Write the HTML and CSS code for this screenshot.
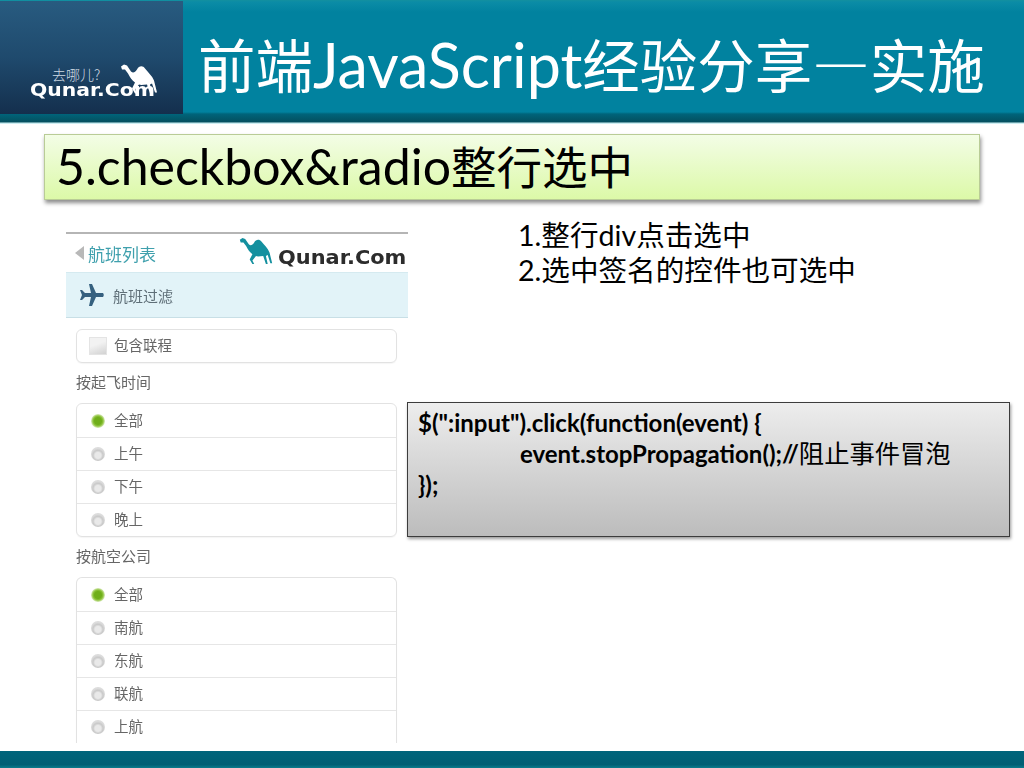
FILE: index.html
```html
<!DOCTYPE html>
<html lang="zh-CN">
<head>
<meta charset="utf-8">
<title>前端JavaScript经验分享—实施</title>
<link rel="stylesheet" href="styles.css">
</head>
<body>
<div class="slide">
  <header class="top">
    <div class="brand">
      <div class="brand-inner">
        <div class="brand-row">
          <span class="brand-cn">去哪儿?</span>
          <svg class="camel camel-white" viewBox="0 0 36 30"><path d="M0 2 L3 0 L6 1 L10 7 C12 9 14 8 16 5 C18 1 22 1 24 4 C27 8 31 11 33 16 L36 28 L34 28 L31 19 L29 20 L31 29 L29 29 L26 20 C23 20 20 21 18 20 L14 25 L16 29 L14 29 L11 24 L14 18 C11 16 9 13 7 9 L4 5 L1 5 Z"/></svg>
        </div>
        <div class="brand-en">Qunar.Com</div>
      </div>
    </div>
    <h1 class="title">前端<span class="title-latin">JavaScript</span>经验分享<span class="title-dash">—</span>实施</h1>
  </header>

  <h2 class="subtitle"><span class="subtitle-latin">5.checkbox&amp;radio</span>整行选中</h2>

  <main class="content">
    <section class="phone">
      <div class="phone-head">
        <span class="back"><i class="back-arrow"></i>航班列表</span>
        <span class="phone-logo">
          <svg class="camel camel-teal" viewBox="0 0 36 30"><path d="M0 2 L3 0 L6 1 L10 7 C12 9 14 8 16 5 C18 1 22 1 24 4 C27 8 31 11 33 16 L36 28 L34 28 L31 19 L29 20 L31 29 L29 29 L26 20 C23 20 20 21 18 20 L14 25 L16 29 L14 29 L11 24 L14 18 C11 16 9 13 7 9 L4 5 L1 5 Z"/></svg>
          <span class="phone-logo-text">Qunar.Com</span>
        </span>
      </div>
      <div class="filter-bar">
        <svg class="plane" viewBox="0 0 24 24"><path d="M9 1 L12 1 L16 10 L23 10 C24 11 24 13 23 14 L16 14 L12 23 L9 23 L11 14 L5 14 L2 17 L0 17 L2 12 L0 7 L2 7 L5 10 L11 10 Z"/></svg>
        <span>航班过滤</span>
      </div>
      <div class="filters">
        <div class="card">
          <div class="row row-single"><i class="check"></i>包含联程</div>
        </div>
        <div class="group-label">按起飞时间</div>
        <div class="card">
          <div class="row"><i class="radio on"></i>全部</div>
          <div class="row"><i class="radio"></i>上午</div>
          <div class="row"><i class="radio"></i>下午</div>
          <div class="row"><i class="radio"></i>晚上</div>
        </div>
        <div class="group-label">按航空公司</div>
        <div class="card card-open">
          <div class="row"><i class="radio on"></i>全部</div>
          <div class="row"><i class="radio"></i>南航</div>
          <div class="row"><i class="radio"></i>东航</div>
          <div class="row"><i class="radio"></i>联航</div>
          <div class="row"><i class="radio"></i>上航</div>
        </div>
      </div>
    </section>

    <section class="side">
      <div class="notes">
        <p>1.整行div点击选中</p>
        <p>2.选中签名的控件也可选中</p>
      </div>
      <div class="code">
        <p>$(":input").click(function(event) {</p>
        <p class="indent">event.stopPropagation();//<span class="cn">阻止事件冒泡</span></p>
        <p>});</p>
      </div>
    </section>
  </main>

  <footer class="bottom"></footer>
</div>
</body>
</html>
```

FILE: styles.css
```css
* { box-sizing: border-box; }
html, body { margin: 0; padding: 0; background: #fff; }
p, h1, h2 { margin: 0; font-weight: inherit; }
i { display: block; }

.slide {
  width: 1024px;
  height: 768px;
  overflow: hidden;
  display: flex;
  flex-direction: column;
  font-family: Lato, "Noto Sans CJK SC", sans-serif;
  color: #000;
}

.top {
  height: 124px;
  flex: none;
  display: flex;
  background: linear-gradient(#13909f 0, #0b8ca6 2px, #01829f 12px, #01829f 112px, #00647a 114px, #04505f 122px, #cdeef2 123px);
}
.brand {
  width: 183px;
  height: 113px;
  flex: none;
  margin-top: 1px;
  padding: 61px 0 0 30px;
  background: linear-gradient(#285b80, #1f4a6d 50%, #142f4d);
}
.brand-inner { width: 127px; }
.brand-row { display: flex; justify-content: space-between; align-items: flex-start; height: 20px; padding-left: 22px; }
.brand-cn { font-family: "Noto Sans CJK SC", sans-serif; font-size: 14px; line-height: 20px; margin-top: 2px; color: #cfdae2; font-weight: 300; }
.camel { display: block; }
.camel-white { width: 36px; height: 35px; fill: #fff; flex: none; }
.brand-en {
  font-family: "DejaVu Sans", sans-serif;
  font-weight: bold;
  font-size: 18px;
  line-height: 16px;
  color: #fff;
  white-space: nowrap;
  transform: scaleX(1.13);
  transform-origin: left center;
}
.title {
  margin: 9px 0 0 15px;
  font-size: 57.5px;
  line-height: 108px;
  color: #fff;
  white-space: nowrap;
}
.title-latin { font-size: 61px; }
.title-dash { font-family: "Noto Sans CJK SC", sans-serif; }

.subtitle {
  flex: none;
  width: 936px;
  height: 66px;
  margin: 10px 0 0 44px;
  padding-left: 11px;
  font-size: 45.5px;
  line-height: 62px;
  white-space: nowrap;
  background: linear-gradient(#f3fde6, #dcf9a8);
  border: 1px solid #b9cc96;
  box-shadow: 1px 3px 4px rgba(0, 0, 0, .45);
}
.subtitle-latin { font-size: 50px; }

.content {
  flex: 1;
  display: flex;
  min-height: 0;
  padding: 18px 0 0 66px;
}

.phone {
  width: 342px;
  height: 511px;
  flex: none;
  margin-top: 14px;
  border-top: 2px solid #b5b5b5;
  overflow: hidden;
  font-family: "Noto Sans CJK SC", sans-serif;
  color: #666;
  filter: blur(0.35px);
}
.phone-head {
  height: 38px;
  display: flex;
  justify-content: space-between;
  align-items: center;
  padding: 0 0 0 9px;
}
.back { display: flex; align-items: center; font-size: 17px; color: #3fa0ad; }
.back-arrow {
  width: 0;
  height: 0;
  margin-right: 4px;
  border-style: solid;
  border-width: 7px 9px 7px 0;
  border-color: transparent #b8b8b8 transparent transparent;
}
.phone-logo { display: flex; align-items: flex-end; height: 30px; width: 170px; }
.camel-teal { width: 36px; height: 27px; fill: #14909f; margin-right: 4px; margin-bottom: 3px; flex: none; }
.phone-logo-text {
  font-family: "DejaVu Sans", sans-serif;
  font-weight: bold;
  font-size: 19px;
  line-height: 22px;
  color: #2c2c2c;
  transform: scaleX(1.1);
  transform-origin: left center;
}
.filter-bar {
  height: 46px;
  display: flex;
  align-items: center;
  gap: 9px;
  padding-left: 14px;
  font-size: 15px;
  color: #5f6f78;
  background: #e2f3f8;
  border-top: 1px solid #d5eaf0;
  border-bottom: 1px solid #c8dfe6;
}
.plane { width: 24px; height: 24px; fill: #35607f; flex: none; }

.filters { padding: 11px 11px 0 10px; }
.card {
  border: 1px solid #e2e2e2;
  border-radius: 6px;
  background: #fff;
  box-shadow: 0 1px 1px rgba(0, 0, 0, .04);
}
.card-open { border-bottom: 0; border-radius: 6px 6px 0 0; }
.row {
  height: 33px;
  display: flex;
  align-items: center;
  gap: 9px;
  padding: 0 0 3px 14px;
  font-size: 14.5px;
  color: #666;
  border-top: 1px solid #e6e6e6;
}
.row:first-child { border-top: 0; }
.row-single { height: 32px; gap: 7px; padding-left: 12px; }
.group-label { height: 40px; font-size: 15px; line-height: 38px; color: #666; }

.radio {
  width: 14px;
  height: 14px;
  flex: none;
  margin-top: 3px;
  border-radius: 50%;
  background: radial-gradient(circle at 50% 60%, #e9e9e9 0 3px, #c9c9c9 5px, #dcdcdc 7px);
}
.radio.on {
  background: radial-gradient(circle at 50% 50%, #6fae1a 0 3.5px, #8cc23a 5px, #dcecc0 7px);
}
.check {
  width: 18px;
  height: 18px;
  flex: none;
  margin-top: 3px;
  background: linear-gradient(160deg, #f2f2f2 40%, #d2d2d2);
  border: 1px solid #e4e4e4;
}

.side { flex: 1; min-width: 0; }
.notes {
  height: 184px;
  padding-left: 110px;
  font-size: 28.6px;
  line-height: 35px;
  white-space: nowrap;
}
.code {
  width: 603px;
  height: 135px;
  margin-left: -1px;
  padding: 4px 0 0 10px;
  font-size: 24px;
  font-weight: bold;
  line-height: 31px;
  white-space: nowrap;
  background: linear-gradient(#ededed, #bcbcbc);
  border: 1px solid #3c3c3c;
  box-shadow: 1px 2px 3px rgba(0, 0, 0, .4);
}
.indent { padding-left: 102px; }
.cn { font-weight: normal; font-size: 25.3px; }

.bottom {
  height: 17px;
  flex: none;
  background: linear-gradient(#00647b, #005f74 80%, #0a7b8c);
}
```
